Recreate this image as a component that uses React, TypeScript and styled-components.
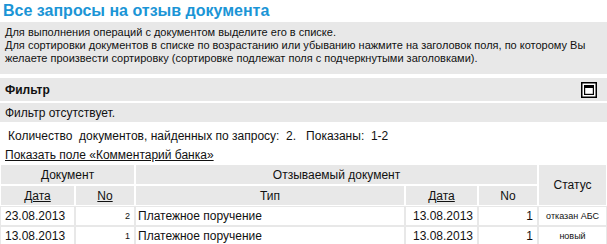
import React from 'react'
import styled, { createGlobalStyle } from 'styled-components'

const GlobalStyle = createGlobalStyle`
  body {
    margin: 0;
    background: #fff;
    font-family: "Liberation Sans", Arial, sans-serif;
    color: #111;
  }
`

const Page = styled.div`
  width: 607px;
`

const Title = styled.h1`
  margin: 0;
  padding: 0 0 0 3px;
  height: 22px;
  font-size: 16px;
  line-height: 22px;
  font-weight: bold;
  color: #1b95d6;
`

const Info = styled.div`
  background: #e8e8e8;
  padding: 4px 5px 6px;
  font-size: 11px;
  line-height: 13px;
  height: 42px;
`

const Panel = styled.div`
  margin-top: 4px;
  display: flex;
  flex-direction: column;
  row-gap: 2px;
`

const PanelHead = styled.div`
  background: #e8e8e8;
  height: 23px;
  display: flex;
  align-items: center;
  justify-content: space-between;
  padding: 0 10px 0 5px;
  font-size: 12px;
  font-weight: bold;
`

const PanelBody = styled.div`
  background: #e8e8e8;
  height: 19px;
  display: flex;
  align-items: center;
  padding: 0 5px;
  font-size: 12px;
`

const Summary = styled.div`
  padding: 5px 8px 0;
  height: 19px;
  font-size: 12px;
  line-height: 19px;
  white-space: pre;
`

const ShowLink = styled.a`
  display: block;
  padding-left: 5px;
  height: 18px;
  font-size: 12px;
  line-height: 18px;
  color: #111;
  text-decoration: underline;
`

const Table = styled.table`
  width: 607px;
  border-collapse: separate;
  border-spacing: 0;
  table-layout: fixed;
  font-size: 12px;
`

const Th = styled.th`
  background: #e8e8e8;
  border: 1px solid #fff;
  font-weight: normal;
  text-align: center;
  height: 19px;
  padding: 0;
`

const SortLink = styled.a`
  color: #111;
  text-decoration: underline;
`

const Td = styled.td<{ $align?: string; $small?: boolean; $pad?: number }>`
  border: 1px solid #e8e8e8;
  background: #fff;
  height: 18px;
  padding: 0 ${p => (p.$pad ?? 4)}px;
  text-align: ${p => p.$align || 'left'};
  font-size: ${p => (p.$small ? '9px' : '12px')};
  white-space: nowrap;
`

const ToggleIcon = () => (
  <svg width="16" height="16" viewBox="0 0 16 16">
    <rect x="0.75" y="0.75" width="14.5" height="14.5" fill="#fff" stroke="#000" strokeWidth="1.5" />
    <rect x="3.6" y="3.6" width="8.8" height="8.8" fill="#fff" stroke="#000" strokeWidth="1.2" />
    <rect x="3" y="3" width="10" height="3" fill="#000" />
  </svg>
)

const rows = [
  { date: '23.08.2013', no: '2', type: 'Платежное поручение', rdate: '13.08.2013', rno: '1', status: 'отказан АБС' },
  { date: '13.08.2013', no: '1', type: 'Платежное поручение', rdate: '13.08.2013', rno: '1', status: 'новый' },
]

const App: React.FC = () => (
  <Page>
    <GlobalStyle />
    <Title>Все запросы на отзыв документа</Title>
    <Info>
      Для выполнения операций с документом выделите его в списке.<br />
      Для сортировки документов в списке по возрастанию или убыванию нажмите на заголовок поля, по которому Вы
      желаете произвести сортировку (сортировке подлежат поля с подчеркнутыми заголовками).
    </Info>
    <Panel>
      <PanelHead>
        Фильтр
        <ToggleIcon />
      </PanelHead>
      <PanelBody>Фильтр отсутствует.</PanelBody>
    </Panel>
    <Summary>{'Количество  документов, найденных по запросу:  2.   Показаны:  1-2'}</Summary>
    <ShowLink href="#">Показать поле «Комментарий банка»</ShowLink>
    <Table>
      <colgroup>
        <col style={{ width: 75 }} />
        <col style={{ width: 60 }} />
        <col style={{ width: 270 }} />
        <col style={{ width: 73 }} />
        <col style={{ width: 60 }} />
        <col style={{ width: 69 }} />
      </colgroup>
      <thead>
        <tr>
          <Th colSpan={2}>Документ</Th>
          <Th colSpan={3}>Отзываемый документ</Th>
          <Th rowSpan={2}>Статус</Th>
        </tr>
        <tr>
          <Th><SortLink href="#">Дата</SortLink></Th>
          <Th><SortLink href="#">No</SortLink></Th>
          <Th>Тип</Th>
          <Th><SortLink href="#">Дата</SortLink></Th>
          <Th>No</Th>
        </tr>
      </thead>
      <tbody>
        {rows.map(r => (
          <tr key={r.date}>
            <Td>{r.date}</Td>
            <Td $align="right" $small>{r.no}</Td>
            <Td $pad={2}>{r.type}</Td>
            <Td $align="right">{r.rdate}</Td>
            <Td $align="right">{r.rno}</Td>
            <Td $align="center" $small $pad={1}>{r.status}</Td>
          </tr>
        ))}
      </tbody>
    </Table>
  </Page>
)

export default App
